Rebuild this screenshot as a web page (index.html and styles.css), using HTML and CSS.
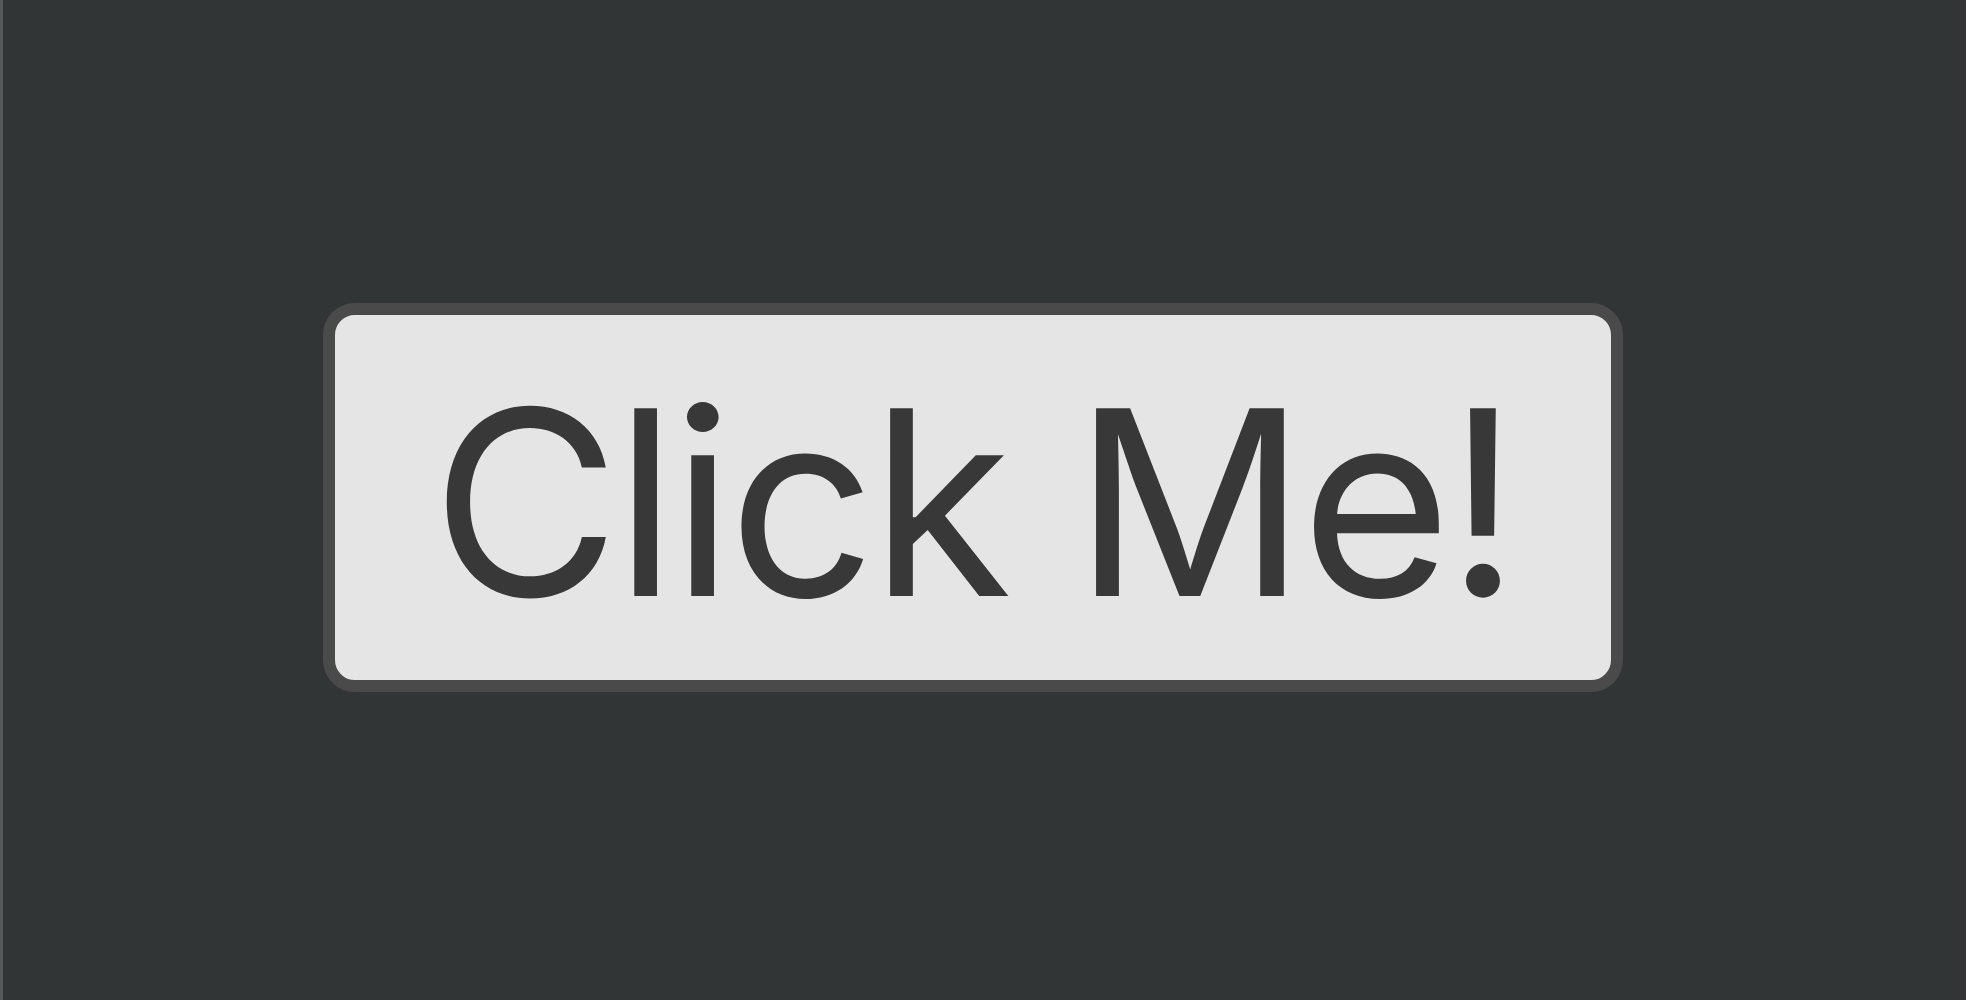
FILE: index.html
```html
<!DOCTYPE html>
<html>
<head>
<meta charset="utf-8">
<link rel="stylesheet" href="styles.css">
</head>
<body>
<main class="stage">
  <button class="big-btn">Click Me!</button>
</main>
</body>
</html>
```

FILE: styles.css
```css
html, body {
  margin: 0;
  height: 100%;
}
body {
  background: #323536;
  border-left: 3px solid #55595a;
  box-sizing: border-box;
}
.stage {
  padding: 303px 0 0 320px;
}
.big-btn {
  box-sizing: border-box;
  width: 1300px;
  height: 389px;
  border: 12px solid #4a4a4a;
  border-radius: 32px;
  background: #e5e5e5;
  color: #383838;
  font-family: Inter, "Noto Sans", sans-serif;
  font-size: 258px;
  letter-spacing: -5.5px;
  line-height: 1;
  display: flex;
  align-items: center;
  justify-content: center;
  padding: 9px 0 0 0;
  cursor: pointer;
}
```
